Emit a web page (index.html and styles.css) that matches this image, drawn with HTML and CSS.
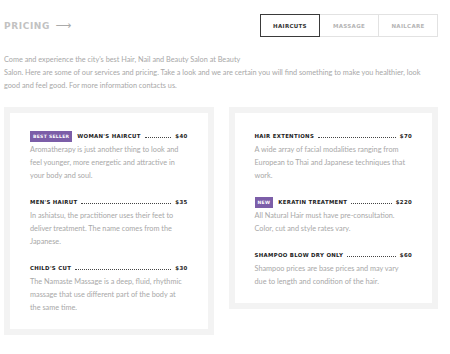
FILE: index.html
```html
<!DOCTYPE html>
<html lang="en">
<head>
    <meta charset="UTF-8">
    <title>Pricing</title>
    <link rel="stylesheet" href="styles.css">
</head>
<body>

<section class="pricing">
    <header class="pricing-head">
        <h2 class="pricing-title">PRICING <span class="arrow">&#10230;</span></h2>
        <ul class="tabs">
            <li class="tab active">HAIRCUTS</li>
            <li class="tab">MASSAGE</li>
            <li class="tab">NAILCARE</li>
        </ul>
    </header>

    <p class="intro">Come and experience the city's best Hair, Nail and Beauty Salon at Beauty<br>Salon. Here are some of our services and pricing. Take a look and we are certain you will find something to make you healthier, look good and feel good. For more information contacts us.</p>

    <div class="cards">
        <div class="card">
            <div class="item">
                <div class="item-head">
                    <span class="badge">BEST SELLER</span>
                    <span class="name">WOMAN'S HAIRCUT</span>
                    <span class="dots"></span>
                    <span class="price">$40</span>
                </div>
                <p class="desc">Aromatherapy is just another thing to look and feel younger, more energetic and attractive in your body and soul.</p>
            </div>
            <div class="item">
                <div class="item-head">
                    <span class="name">MEN'S HAIRUT</span>
                    <span class="dots"></span>
                    <span class="price">$35</span>
                </div>
                <p class="desc">In ashiatsu, the practitioner uses their feet to deliver treatment. The name comes from the Japanese.</p>
            </div>
            <div class="item">
                <div class="item-head">
                    <span class="name">CHILD'S CUT</span>
                    <span class="dots"></span>
                    <span class="price">$30</span>
                </div>
                <p class="desc">The Namaste Massage is a deep, fluid, rhythmic massage that use different part of the body at the same time.</p>
            </div>
        </div>

        <div class="card">
            <div class="item">
                <div class="item-head">
                    <span class="name">HAIR EXTENTIONS</span>
                    <span class="dots"></span>
                    <span class="price">$70</span>
                </div>
                <p class="desc">A wide array of facial modalities ranging from European to Thai and Japanese techniques that work.</p>
            </div>
            <div class="item">
                <div class="item-head">
                    <span class="badge">NEW</span>
                    <span class="name">KERATIN TREATMENT</span>
                    <span class="dots"></span>
                    <span class="price">$220</span>
                </div>
                <p class="desc">All Natural Hair must have pre-consultation. Color, cut and style rates vary.</p>
            </div>
            <div class="item">
                <div class="item-head">
                    <span class="name">SHAMPOO BLOW DRY ONLY</span>
                    <span class="dots"></span>
                    <span class="price">$60</span>
                </div>
                <p class="desc">Shampoo prices are base prices and may vary due to length and condition of the hair.</p>
            </div>
        </div>
    </div>
</section>

</body>
</html>
```

FILE: styles.css
```css
* {
    margin: 0;
    padding: 0;
    box-sizing: border-box;
}

body {
    font-family: 'Lato', sans-serif;
    background-color: #fff;
}

.pricing {
    width: 434px;
    margin-left: 4px;
    padding-top: 14px;
}

.pricing-head {
    display: flex;
    justify-content: space-between;
    align-items: center;
}

.pricing-title {
    font-family: 'DejaVu Sans', sans-serif;
    font-size: 9px;
    font-weight: bold;
    letter-spacing: 0.6px;
    color: #c2c2c2;
}

.pricing-title .arrow {
    font-weight: normal;
    font-size: 11px;
    color: #aaa;
    margin-left: 2px;
}

.tabs {
    list-style-type: none;
    display: flex;
}

.tab {
    width: 60px;
    height: 23px;
    display: flex;
    align-items: center;
    justify-content: center;
    border: 1px solid #e2e2e2;
    margin-left: -1px;
    font-family: 'DejaVu Sans', sans-serif;
    font-size: 5.5px;
    font-weight: bold;
    letter-spacing: 0.3px;
    color: #b5b5b5;
}

.tab.active {
    border: 1.5px solid #3a3a3a;
    color: #333;
    position: relative;
}

.intro {
    margin-top: 17px;
    font-size: 7.3px;
    line-height: 12.8px;
    color: #a8a8a8;
}

.cards {
    display: flex;
    align-items: flex-start;
    gap: 15px;
    margin-top: 15px;
}

.card {
    flex: 1;
    border: 6px solid #f3f3f3;
    background-color: #fff;
    padding: 17px 20px 15px 20px;
}

.item {
    margin-bottom: 14px;
}

.item:last-child {
    margin-bottom: 0;
}

.item-head {
    display: flex;
    align-items: center;
    height: 12px;
    font-family: 'DejaVu Sans', sans-serif;
    font-size: 5.4px;
    font-weight: bold;
    letter-spacing: 0.3px;
    color: #222;
}

.badge {
    background-color: #7c5ea8;
    color: #fff;
    font-size: 4.5px;
    letter-spacing: 0.3px;
    padding: 3px 3px;
    margin-right: 5px;
}

.dots {
    flex: 1;
    border-bottom: 1px dotted #444;
    margin: 3px 4px 0 4px;
}

.desc {
    margin-top: 1px;
    font-size: 7.3px;
    line-height: 13px;
    color: #a8a8a8;
}
```
